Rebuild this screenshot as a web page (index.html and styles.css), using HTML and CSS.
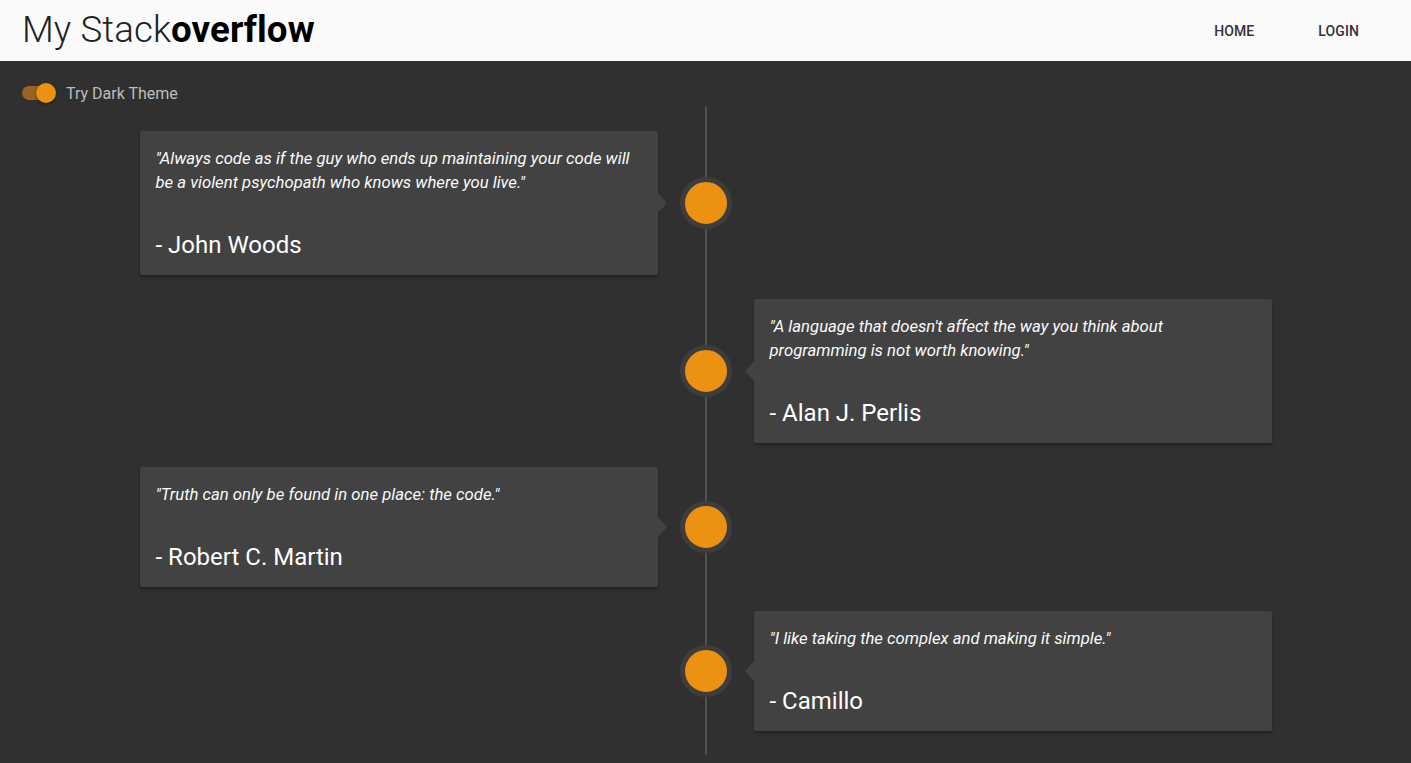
FILE: index.html
```html
<!DOCTYPE html>
<html lang="en">
<head>
<meta charset="utf-8">
<title>My Stackoverflow</title>
<link rel="stylesheet" href="styles.css">
</head>
<body>
<header class="topbar">
  <h1 class="brand"><span class="brand-light">My Stack</span><span class="brand-bold">overflow</span></h1>
  <nav class="nav">
    <a class="nav-link" href="#">HOME</a>
    <a class="nav-link" href="#">LOGIN</a>
  </nav>
</header>
<main class="page">
  <div class="theme-toggle">
    <span class="switch"><span class="switch-track"></span><span class="switch-thumb"></span></span>
    <span class="toggle-label">Try Dark Theme</span>
  </div>
  <section class="timeline">
    <div class="tl-item left">
      <div class="card">
        <p class="quote">"Always code as if the guy who ends up maintaining your code will be a violent psychopath who knows where you live."</p>
        <p class="author">- John Woods</p>
      </div>
      <div class="dot-col"><span class="dot"></span></div>
      <div class="empty"></div>
    </div>
    <div class="tl-item right">
      <div class="empty"></div>
      <div class="dot-col"><span class="dot"></span></div>
      <div class="card">
        <p class="quote">"A language that doesn't affect the way you think about programming is not worth knowing."</p>
        <p class="author">- Alan J. Perlis</p>
      </div>
    </div>
    <div class="tl-item left">
      <div class="card">
        <p class="quote">"Truth can only be found in one place: the code."</p>
        <p class="author">- Robert C. Martin</p>
      </div>
      <div class="dot-col"><span class="dot"></span></div>
      <div class="empty"></div>
    </div>
    <div class="tl-item right">
      <div class="empty"></div>
      <div class="dot-col"><span class="dot"></span></div>
      <div class="card">
        <p class="quote">"I like taking the complex and making it simple."</p>
        <p class="author">- Camillo</p>
      </div>
    </div>
  </section>
</main>
</body>
</html>
```

FILE: styles.css
```css
* { box-sizing: border-box; }
html, body { margin: 0; padding: 0; }
body {
  background: #303030;
  font-family: Roboto, "Liberation Sans", sans-serif;
  min-height: 763px;
}
.topbar {
  height: 61px;
  background: #fafafa;
  display: flex;
  align-items: center;
  justify-content: space-between;
  padding: 0 29px 0 22px;
}
.brand {
  margin: 0;
  font-size: 36.7px;
  line-height: 1;
  color: #000;
  letter-spacing: 0.1px;
}
.brand-light { font-weight: 300; color: #222; }
.brand-bold { font-weight: 700; }
.nav { display: flex; gap: 64px; padding-right: 23px; }
.nav-link {
  font-size: 14px;
  font-weight: 500;
  color: #333;
  text-decoration: none;
  letter-spacing: 0.1px;
}
.page { padding: 20px 0 8px; }
.theme-toggle {
  display: flex;
  align-items: center;
  height: 24px;
  padding-left: 22px;
  gap: 10px;
}
.switch {
  position: relative;
  width: 34px;
  height: 24px;
  display: inline-block;
}
.switch-track {
  position: absolute;
  left: 0;
  top: 5px;
  width: 32px;
  height: 14px;
  border-radius: 7px;
  background: rgba(237, 145, 18, 0.55);
}
.switch-thumb {
  position: absolute;
  left: 14px;
  top: 2px;
  width: 20px;
  height: 20px;
  border-radius: 50%;
  background: #ed9112;
  box-shadow: 0 1px 3px rgba(0,0,0,0.5);
}
.toggle-label {
  color: #bdbdbd;
  font-size: 16px;
}
.timeline {
  position: relative;
  width: 1132px;
  margin: 2px auto 0;
  padding: 24px 0;
  display: flex;
  flex-direction: column;
  gap: 24px;
}
.timeline::before {
  content: "";
  position: absolute;
  left: 565px;
  top: 0;
  bottom: 0;
  width: 2px;
  background: #525252;
}
.tl-item {
  display: grid;
  grid-template-columns: 518px 96px 518px;
  align-items: center;
  position: relative;
}
.card {
  position: relative;
  background: #424242;
  border-radius: 2px;
  padding: 16px 16px 14px;
  box-shadow: 0 2px 3px rgba(0,0,0,0.3);
  color: #fff;
}
.left .card::after,
.right .card::after {
  content: "";
  position: absolute;
  top: 50%;
  margin-top: -10px;
  border-top: 10px solid transparent;
  border-bottom: 10px solid transparent;
}
.left .card::after {
  right: -9px;
  border-left: 9px solid #424242;
}
.right .card::after {
  left: -9px;
  border-right: 9px solid #424242;
}
.quote {
  margin: 0 0 34px;
  font-style: italic;
  font-size: 16.7px;
  line-height: 24px;
  color: #fafafa;
}
.author {
  margin: 0;
  font-size: 24px;
  line-height: 32px;
  color: #fff;
}
.dot-col {
  display: flex;
  justify-content: center;
  align-items: center;
  position: relative;
  z-index: 1;
}
.dot {
  width: 52px;
  height: 52px;
  border-radius: 50%;
  background: #ed9112;
  border: 5px solid #3d3d3d;
  display: block;
}
```
